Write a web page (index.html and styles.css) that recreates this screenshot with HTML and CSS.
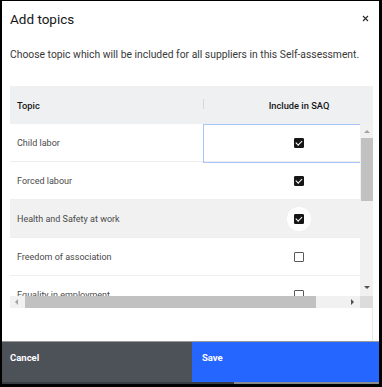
FILE: index.html
```html
<!DOCTYPE html>
<html>
<head>
<meta charset="utf-8">
<link rel="stylesheet" href="styles.css">
</head>
<body>
<div class="modal">
  <div class="modal-head">
    <h1 class="title">Add topics</h1>
    <button class="close" aria-label="Close">
      <svg width="7" height="7" viewBox="0 0 7 7"><path d="M1 1L6 6M6 1L1 6" stroke="#2a2a2a" stroke-width="1.1"/></svg>
    </button>
  </div>
  <p class="desc">Choose topic which will be included for all suppliers in this Self-assessment.</p>
  <div class="grid">
    <div class="thead">
      <div class="th th-topic">Topic</div>
      <div class="th th-inc"><span class="sep"></span>Include in SAQ</div>
    </div>
    <div class="tbody">
      <div class="row">
        <div class="cell cell-topic">Child labor</div>
        <div class="cell cell-inc focused"><span class="cb on"></span></div>
      </div>
      <div class="row">
        <div class="cell cell-topic">Forced labour</div>
        <div class="cell cell-inc"><span class="cb on"></span></div>
      </div>
      <div class="row hover">
        <div class="cell cell-topic">Health and Safety at work</div>
        <div class="cell cell-inc"><span class="halo"><span class="cb on"></span></span></div>
      </div>
      <div class="row">
        <div class="cell cell-topic">Freedom of association</div>
        <div class="cell cell-inc"><span class="cb"></span></div>
      </div>
      <div class="row">
        <div class="cell cell-topic">Equality in employment</div>
        <div class="cell cell-inc"><span class="cb"></span></div>
      </div>
    </div>
    <div class="vscroll">
      <span class="arr arr-up"></span>
      <span class="vthumb"></span>
      <span class="arr arr-down"></span>
    </div>
    <div class="hscroll">
      <span class="arr arr-left"></span>
      <span class="hthumb"></span>
      <span class="arr arr-right"></span>
    </div>
    <div class="corner"></div>
  </div>
  <div class="spacer"></div>
  <div class="footer">
    <button class="btn btn-cancel">Cancel</button>
    <button class="btn btn-save">Save</button>
  </div>
  <div class="bottom-strip"><span class="strip-dark"></span><span class="strip-light"></span></div>
</div>
</body>
</html>
```
FILE: styles.css
```css
* { box-sizing: border-box; }
html, body { margin: 0; padding: 0; }
body {
  background: #000;
  width: 382px;
  height: 387px;
  overflow: hidden;
  font-family: Roboto, "Noto Sans", sans-serif;
  color: #161616;
}
.modal {
  margin: 1px 3px 3px 2px;
  width: 377px;
  height: 383px;
  background: #fff;
  display: flex;
  flex-direction: column;
}
.modal-head {
  display: flex;
  justify-content: space-between;
  align-items: center;
  height: 36px;
  padding: 0 10px 0 8px;
}
.title {
  margin: 0;
  font-size: 13.5px;
  font-weight: 400;
  color: #161616;
}
.close {
  border: 0;
  background: none;
  padding: 0;
  width: 7px;
  height: 7px;
  display: flex;
  margin-top: -2px;
}
.desc {
  margin: 11px 0 0 8px;
  height: 24px;
  font-size: 10.35px;
  color: #393939;
  line-height: 13px;
  white-space: nowrap;
}
.grid {
  margin: 14px 6px 0 8px;
  display: grid;
  grid-template-columns: 350px 13px;
  grid-template-rows: 38px 172px 12px;
}
.thead {
  grid-column: 1 / 3;
  background: #eff0f2;
  display: flex;
  align-items: center;
  overflow: hidden;
  font-size: 9.3px;
  font-weight: 500;
  color: #161616;
}
.th-topic {
  width: 193px;
  flex: none;
  padding-left: 7px;
}
.th-inc {
  width: 192px;
  flex: none;
  text-align: center;
  position: relative;
}
.sep {
  position: absolute;
  left: 0;
  top: -1px;
  height: 10px;
  width: 1px;
  background: #d6d8db;
}
.tbody {
  overflow: hidden;
  width: 350px;
}
.row {
  display: flex;
  height: 38px;
  border-bottom: 1px solid #eeeeee;
  background: #fff;
}
.row.hover { background: #f1f1f1; }
.cell {
  flex: none;
  display: flex;
  align-items: center;
  font-size: 9px;
  color: #4a4a4a;
}
.cell-topic {
  width: 193px;
  padding-left: 7px;
}
.cell-inc {
  width: 192px;
  justify-content: center;
  position: relative;
}
.focused::after {
  content: "";
  position: absolute;
  left: 0;
  top: 0;
  width: 157px;
  height: 37px;
  border: 1px solid #a9c4fb;
}
.cb {
  width: 10px;
  height: 10px;
  border-radius: 1px;
  border: 1.3px solid #595959;
  background: #fff;
  position: relative;
}
.cb.on {
  background: #161616;
  border-color: #161616;
}
.cb.on::after {
  content: "";
  position: absolute;
  left: 2.2px;
  top: 0.6px;
  width: 2.5px;
  height: 5px;
  border-right: 1px solid #fff;
  border-bottom: 1px solid #fff;
  transform: rotate(45deg);
}
.halo {
  width: 24px;
  height: 24px;
  border-radius: 50%;
  background: #fff;
  display: flex;
  align-items: center;
  justify-content: center;
}
.vscroll {
  background: #f1f1f1;
  display: flex;
  flex-direction: column;
  align-items: center;
}
.vthumb {
  width: 12px;
  height: 63px;
  background: #c1c1c1;
  margin-top: 5px;
}
.arr { width: 0; height: 0; display: block; }
.arr-up {
  margin-top: 6px;
  border-left: 3px solid transparent;
  border-right: 3px solid transparent;
  border-bottom: 3px solid #a3a3a3;
}
.arr-down {
  margin-top: auto;
  margin-bottom: 7px;
  border-left: 3px solid transparent;
  border-right: 3px solid transparent;
  border-top: 3px solid #505050;
}
.hscroll {
  background: #f1f1f1;
  display: flex;
  align-items: center;
}
.arr-left {
  margin-left: 5px;
  border-top: 3px solid transparent;
  border-bottom: 3px solid transparent;
  border-right: 3px solid #a3a3a3;
}
.hthumb {
  height: 12px;
  width: 291px;
  margin-left: 7px;
  background: #c1c1c1;
}
.arr-right {
  margin-left: auto;
  margin-right: 6px;
  border-top: 3px solid transparent;
  border-bottom: 3px solid transparent;
  border-left: 3px solid #505050;
}
.corner { background: #dcdcdc; }
.spacer {
  flex: 1;
  border-right: 1px solid #e8e8e8;
  margin-right: 6px;
}
.footer {
  display: flex;
  height: 41px;
  border-top: 1px solid #9a9a9a;
}
.btn {
  border: 0;
  margin: 0;
  text-align: left;
  font-family: Roboto, "Noto Sans", sans-serif;
  font-size: 9.5px;
  font-weight: 700;
  color: #fff;
  display: flex;
  align-items: flex-start;
  padding: 10px 0 0 8px;
}
.btn-cancel { background: #4d5158; width: 190px; flex: none; }
.btn-save { background: #2466ff; padding-left: 10px; flex: 1; }
.bottom-strip { display: flex; height: 2px; }
.strip-dark { width: 232px; background: #3a3d42; }
.strip-light { flex: 1; background: #8a8a8a; }
```
